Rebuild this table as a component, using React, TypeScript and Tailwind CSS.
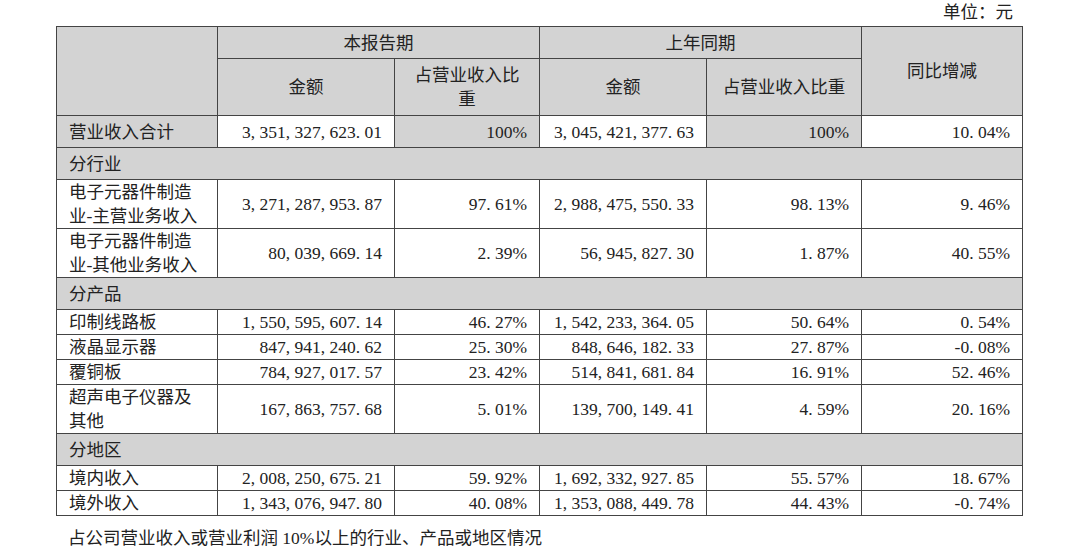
const gray = "bg-[#d3d3d3]";
const cell = "border border-[#444] px-[12px] py-0";

type Row =
  | { kind: "section"; label: string }
  | { kind: "data"; label: string; values: string[]; total?: boolean };

const rows: Row[] = [
  {
    kind: "data",
    total: true,
    label: "营业收入合计",
    values: ["3,351,327,623.01", "100%", "3,045,421,377.63", "100%", "10.04%"],
  },
  { kind: "section", label: "分行业" },
  {
    kind: "data",
    label: "电子元器件制造业-主营业务收入",
    values: ["3,271,287,953.87", "97.61%", "2,988,475,550.33", "98.13%", "9.46%"],
  },
  {
    kind: "data",
    label: "电子元器件制造业-其他业务收入",
    values: ["80,039,669.14", "2.39%", "56,945,827.30", "1.87%", "40.55%"],
  },
  { kind: "section", label: "分产品" },
  {
    kind: "data",
    label: "印制线路板",
    values: ["1,550,595,607.14", "46.27%", "1,542,233,364.05", "50.64%", "0.54%"],
  },
  {
    kind: "data",
    label: "液晶显示器",
    values: ["847,941,240.62", "25.30%", "848,646,182.33", "27.87%", "-0.08%"],
  },
  {
    kind: "data",
    label: "覆铜板",
    values: ["784,927,017.57", "23.42%", "514,841,681.84", "16.91%", "52.46%"],
  },
  {
    kind: "data",
    label: "超声电子仪器及其他",
    values: ["167,863,757.68", "5.01%", "139,700,149.41", "4.59%", "20.16%"],
  },
  { kind: "section", label: "分地区" },
  {
    kind: "data",
    label: "境内收入",
    values: ["2,008,250,675.21", "59.92%", "1,692,332,927.85", "55.57%", "18.67%"],
  },
  {
    kind: "data",
    label: "境外收入",
    values: ["1,343,076,947.80", "40.08%", "1,353,088,449.78", "44.43%", "-0.74%"],
  },
];

// half-width punctuation, like the Song typeface in the source PDF
function Num({ v }: { v: string }) {
  const parts = v.split(/([,.])/);
  return (
    <>
      {parts.map((p, i) =>
        p === "," || p === "." ? (
          <span key={i} className="inline-block w-[0.5em] text-left">
            {p}
          </span>
        ) : (
          <span key={i}>{p}</span>
        )
      )}
    </>
  );
}

export default function App() {
  return (
    <div className="w-[1080px] h-[553px] bg-white text-[17.5px] leading-[24px] text-[#222] font-[family-name:'Liberation_Serif','Noto_Sans_CJK_SC',serif]">
      <div className="h-[26px] flex justify-end items-start pr-[67px]">单位：元</div>

      <table className="ml-[56px] w-[966px] table-fixed border-collapse">
        <colgroup>
          <col className="w-[161px]" />
          <col className="w-[177px]" />
          <col className="w-[145px]" />
          <col className="w-[167px]" />
          <col className="w-[155px]" />
          <col className="w-[161px]" />
        </colgroup>
        <thead>
          <tr className="h-[32px]">
            <th rowSpan={2} className={`${cell} ${gray}`} />
            <th colSpan={2} className={`${cell} ${gray} font-normal text-center`}>
              本报告期
            </th>
            <th colSpan={2} className={`${cell} ${gray} font-normal text-center`}>
              上年同期
            </th>
            <th rowSpan={2} className={`${cell} ${gray} font-normal text-center`}>
              同比增减
            </th>
          </tr>
          <tr className="h-[57px]">
            <th className={`${cell} ${gray} font-normal text-center`}>金额</th>
            <th className={`${cell} ${gray} font-normal text-center`}>占营业收入比重</th>
            <th className={`${cell} ${gray} font-normal text-center`}>金额</th>
            <th className={`${cell} ${gray} font-normal text-center`}>占营业收入比重</th>
          </tr>
        </thead>
        <tbody>
          {rows.map((r) =>
            r.kind === "section" ? (
              <tr key={r.label} className="h-[32px]">
                <td colSpan={6} className={`${cell} ${gray} text-left`}>
                  {r.label}
                </td>
              </tr>
            ) : (
              <tr key={r.label} className={r.total ? "h-[32px]" : ""}>
                <td className={`${cell} text-left ${r.total ? gray : "bg-white"}`}>{r.label}</td>
                {r.values.map((v, i) => (
                  <td
                    key={i}
                    className={`${cell} text-right whitespace-nowrap ${
                      r.total && i % 2 === 1 ? gray : "bg-white"
                    }`}
                  >
                    <Num v={v} />
                  </td>
                ))}
              </tr>
            )
          )}
        </tbody>
      </table>

      <p className="mt-[10px] pl-[68px]">占公司营业收入或营业利润 10%以上的行业、产品或地区情况</p>
    </div>
  );
}
